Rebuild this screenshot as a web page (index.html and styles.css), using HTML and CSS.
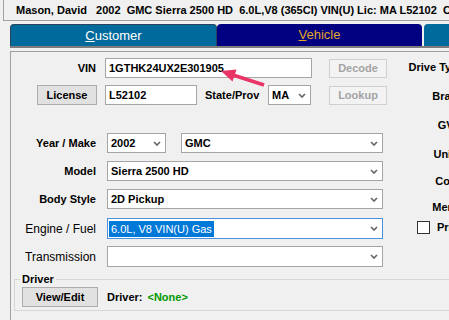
FILE: index.html
```html
<!DOCTYPE html>
<html lang="en">
<head>
    <meta charset="UTF-8">
    <title>Vehicle</title>
    <link rel="stylesheet" href="styles.css">
</head>
<body>
    <div class="window">
        <div class="title-bar">Mason, David   2002  GMC Sierra 2500 HD  6.0L,V8 (365CI) VIN(U) Lic: MA L52102  C</div>

        <div class="tabs">
            <div class="tab tab-customer"><u>C</u>ustomer</div>
            <div class="tab tab-vehicle"><u>V</u>ehicle</div>
            <div class="tab tab-more"></div>
        </div>
        <div class="tab-rule"></div>

        <div class="panel">
            <div class="form">
                <div class="row row-vin">
                    <span class="label">VIN</span>
                    <div class="field field-vin">1GTHK24UX2E301905</div>
                    <button class="btn btn-decode" disabled>Decode</button>
                </div>

                <div class="row row-license">
                    <button class="btn btn-license">License</button>
                    <div class="field field-plate">L52102</div>
                    <span class="label label-state">State/Prov</span>
                    <div class="field select select-state">MA
                        <svg class="chevron" viewBox="0 0 8 5"><path d="M1 1L4 4L7 1"/></svg>
                    </div>
                    <button class="btn btn-lookup" disabled>Lookup</button>
                </div>

                <div class="row row-year">
                    <span class="label">Year / Make</span>
                    <div class="field select select-year">2002
                        <svg class="chevron" viewBox="0 0 8 5"><path d="M1 1L4 4L7 1"/></svg>
                    </div>
                    <div class="field select select-make">GMC
                        <svg class="chevron" viewBox="0 0 8 5"><path d="M1 1L4 4L7 1"/></svg>
                    </div>
                </div>

                <div class="row">
                    <span class="label">Model</span>
                    <div class="field select select-wide">Sierra 2500 HD
                        <svg class="chevron" viewBox="0 0 8 5"><path d="M1 1L4 4L7 1"/></svg>
                    </div>
                </div>

                <div class="row">
                    <span class="label">Body Style</span>
                    <div class="field select select-wide">2D Pickup
                        <svg class="chevron" viewBox="0 0 8 5"><path d="M1 1L4 4L7 1"/></svg>
                    </div>
                </div>

                <div class="row row-engine">
                    <span class="label label-plain">Engine / Fuel</span>
                    <div class="field select select-wide focused">
                        <span class="highlight">6.0L, V8 VIN(U) Gas</span>
                        <svg class="chevron" viewBox="0 0 8 5"><path d="M1 1L4 4L7 1"/></svg>
                    </div>
                </div>

                <div class="row row-trans">
                    <span class="label label-plain">Transmission</span>
                    <div class="field select select-wide">
                        <svg class="chevron" viewBox="0 0 8 5"><path d="M1 1L4 4L7 1"/></svg>
                    </div>
                </div>

                <fieldset class="driver">
                    <legend>Driver</legend>
                    <div class="driver-row">
                        <button class="btn btn-view">View/Edit</button>
                        <span class="driver-label">Driver:</span>
                        <span class="driver-none">&lt;None&gt;</span>
                    </div>
                </fieldset>
            </div>

            <div class="side">
                <span class="side-label">Drive Type</span>
                <span class="side-label">Brand</span>
                <span class="side-label">GVW</span>
                <span class="side-label">Unit #</span>
                <span class="side-label">Color</span>
                <span class="side-label">Memo</span>
                <label class="side-check"><span class="checkbox"></span>Primary</label>
            </div>
        </div>

        <svg class="arrow" width="449" height="320" viewBox="0 0 449 320">
            <line x1="264" y1="85" x2="233" y2="75" />
            <polygon points="221,71 236.5,69.5 232.5,81.5" />
        </svg>
    </div>
</body>
</html>
```

FILE: styles.css
```css
* {
    margin: 0;
    padding: 0;
    box-sizing: border-box;
}

body {
    font-family: 'Liberation Sans', Arial, sans-serif;
    font-size: 11px;
    background: #f0f0f0;
    color: #000;
}

.window {
    position: relative;
    width: 449px;
    height: 320px;
    overflow: hidden;
}

.title-bar {
    width: 600px;
    height: 21px;
    margin-left: 3px;
    padding-left: 12px;
    border-left: 1px solid #a0a0a0;
    border-bottom: 1px solid #a0a0a0;
    line-height: 20px;
    font-weight: bold;
    white-space: pre;
}

/* tab strip */
.tabs {
    display: flex;
    height: 22px;
    margin: 3px 0 0 10px;
}

.tab {
    height: 22px;
    line-height: 21px;
    text-align: center;
    font-size: 13px;
    border-radius: 4px 4px 0 0;
    flex: none;
}

.tab-customer {
    width: 207px;
    background: #006a9c;
    color: #fff;
    border: 1px solid #27465e;
    border-bottom: none;
}

.tab-vehicle {
    width: 205px;
    background: #000080;
    color: #e0a62a;
}

.tab-more {
    width: 100px;
    margin-left: 2px;
    background: #006a9c;
}

.tab-rule {
    height: 2px;
    margin-left: 10px;
    background: #7d7d7d;
}

/* main panel */
.panel {
    display: flex;
    height: 300px;
    margin: 3px 0 0 10px;
    border-left: 1px solid #a0a0a0;
    border-top: 1px solid #a0a0a0;
}

.form {
    width: 389px;
    padding-top: 6px;
    flex: none;
}

.row {
    display: flex;
    align-items: center;
    height: 20px;
    margin-top: 8px;
}

.row-vin {
    margin-top: 0;
}

.row-license {
    margin-top: 7px;
}

.row-year {
    margin-top: 28px;
}

.row-engine {
    height: 21px;
    margin-top: 9px;
}

.row-trans {
    height: 21px;
    margin-top: 7px;
}

.label {
    width: 85px;
    flex: none;
    text-align: right;
    font-weight: bold;
}

.label-plain {
    font-weight: normal;
    font-size: 12px;
}

.field {
    height: 20px;
    flex: none;
    padding-left: 3px;
    background: #fff;
    border: 1px solid #a5a5a5;
    line-height: 18px;
    font-weight: bold;
    white-space: nowrap;
    overflow: hidden;
}

.row-engine .field,
.row-trans .field {
    height: 21px;
}

.field-vin {
    width: 207px;
    margin-left: 9px;
}

.field-plate {
    width: 92px;
    margin-left: 8px;
}

.select {
    display: flex;
    align-items: center;
    justify-content: space-between;
    padding-right: 4px;
}

.chevron {
    width: 8px;
    height: 5px;
    margin-left: auto;
    fill: none;
    stroke: #626262;
    stroke-width: 1.6;
}

.select-state {
    width: 43px;
}

.select-year {
    width: 59px;
    margin-left: 11px;
}

.select-make {
    width: 202px;
    margin-left: 15px;
}

.select-wide {
    width: 276px;
    margin-left: 11px;
}

.focused {
    border-color: #4a90dc;
    padding-left: 1px;
}

.highlight {
    padding: 0 2px;
    background: #0078d7;
    color: #fff;
    font-weight: normal;
    line-height: 16px;
}

.label-state {
    width: 63px;
    margin-left: 8px;
    text-align: left;
}

/* buttons */
.btn {
    height: 20px;
    flex: none;
    font-family: inherit;
    font-size: 11px;
    font-weight: bold;
    color: #000;
    background: #e1e1e1;
    border: 1px solid #adadad;
}

.btn:disabled {
    height: 19px;
    color: #a3a3a3;
    background: #f3f3f3;
    border-color: #d0d0d0;
}

.btn-decode {
    width: 58px;
    margin-left: 17px;
}

.btn-license {
    width: 60px;
    margin-left: 26px;
}

.btn-lookup {
    width: 58px;
    margin-left: 18px;
}

.btn-view {
    width: 76px;
}

/* driver group */
.driver {
    width: 520px;
    margin: 6px 0 0 3px;
    padding: 0 0 3px 7px;
    border: 1px solid #d6d6d6;
}

.driver legend {
    margin-left: -2px;
    padding: 0 2px;
    line-height: 12px;
    font-weight: bold;
}

.driver-row {
    display: flex;
    align-items: center;
    margin-top: 2px;
}

.driver-label {
    margin-left: 9px;
    font-weight: bold;
}

.driver-none {
    margin-left: 5px;
    font-weight: bold;
    color: #009a00;
}

/* right column, cut by the window edge */
.side {
    display: grid;
    grid-template-rows: 29px 29px 29px 27px 26px 20px 14px;
    padding-top: 8px;
}

.side-label {
    width: 64px;
    line-height: 14px;
    text-align: right;
    font-weight: bold;
    white-space: nowrap;
}

.side-check {
    display: flex;
    align-items: center;
    margin-left: 17px;
    font-weight: bold;
    white-space: nowrap;
}

.checkbox {
    width: 13px;
    height: 13px;
    margin-right: 7px;
    background: #fff;
    border: 1px solid #333;
}

/* annotation arrow */
.arrow {
    position: absolute;
    left: 0;
    top: 0;
    pointer-events: none;
}

.arrow line {
    stroke: #ea3366;
    stroke-width: 3.5;
}

.arrow polygon {
    fill: #ea3366;
}
```
